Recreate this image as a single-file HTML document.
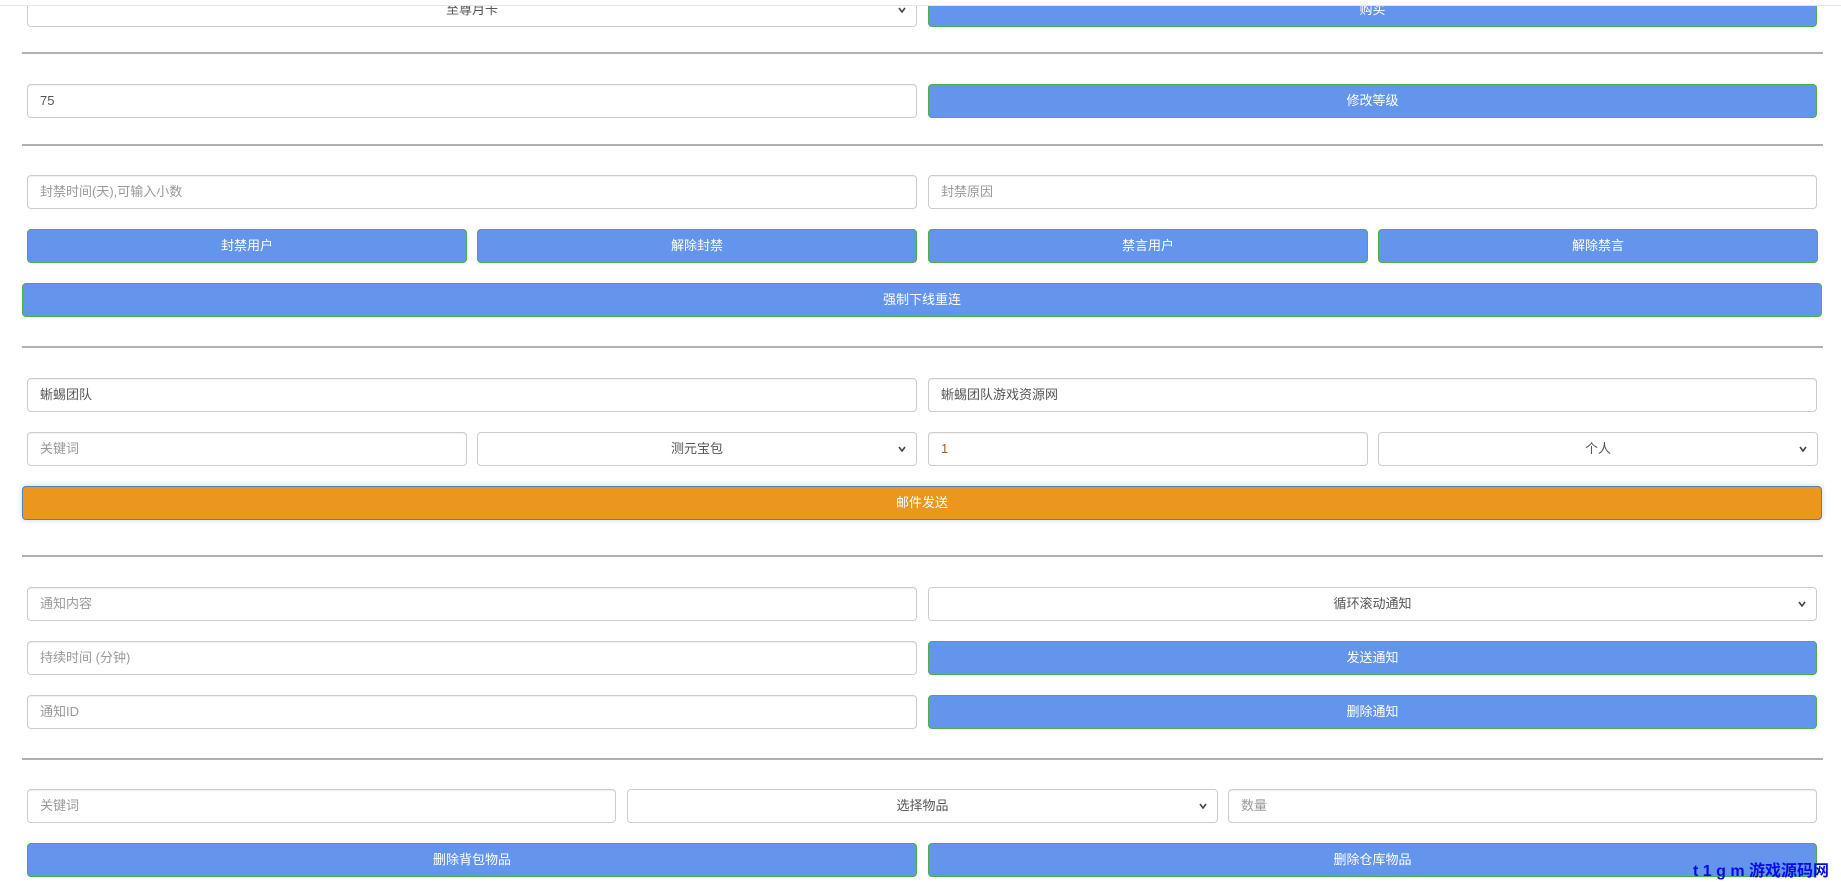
<!DOCTYPE html>
<html><head><meta charset="utf-8"><style>
*{box-sizing:border-box;margin:0;padding:0}
html,body{width:1841px;height:882px;overflow:hidden;background:#fff;font-family:"Liberation Sans","Noto Sans CJK SC",sans-serif;font-size:13px}
.a{position:absolute}
.in{position:absolute;height:34px;border:1px solid #ccc;border-radius:4px;background:#fff;color:#999;padding-left:12px;line-height:32px;box-shadow:inset 0 1px 1px rgba(0,0,0,.06)}
.v{color:#555}
.sel{position:absolute;height:34px;border:1px solid #ccc;border-radius:4px;background:#fff;color:#555;text-align:center;line-height:32px}
.sel svg{position:absolute;right:10px;top:13px}
.btn{position:absolute;height:34px;border:1px solid #4cae4c;border-radius:4px;background:#6495ed;color:#fff;text-align:center;line-height:32px}
.hr{position:absolute;left:22px;width:1801px;height:2px;background:#b0b0b0}
</style></head><body>
<div class="sel" style="left:27px;top:-7px;width:890px">至尊月卡<svg width="8" height="6"><path d="M1 1l3 4 3-4" stroke="#444" stroke-width="1.6" fill="none"/></svg></div>
<div class="btn" style="left:928px;top:-7px;width:889px">购买</div>
<div class="a" style="left:0;top:0;width:1841px;height:6px;background:#fff;border-bottom:1px solid #e6e6e6"></div>
<div class="hr" style="top:52px"></div>
<div class="in v" style="left:27px;top:84px;width:890px">75</div>
<div class="btn" style="left:928px;top:84px;width:889px">修改等级</div>
<div class="hr" style="top:144px"></div>
<div class="in" style="left:27px;top:175px;width:890px">封禁时间(天),可输入小数</div>
<div class="in" style="left:928px;top:175px;width:889px">封禁原因</div>
<div class="btn" style="left:27px;top:229px;width:440px">封禁用户</div>
<div class="btn" style="left:477px;top:229px;width:440px">解除封禁</div>
<div class="btn" style="left:928px;top:229px;width:440px">禁言用户</div>
<div class="btn" style="left:1378px;top:229px;width:440px">解除禁言</div>
<div class="btn" style="left:22px;top:283px;width:1800px">强制下线重连</div>
<div class="hr" style="top:346px"></div>
<div class="in v" style="left:27px;top:378px;width:890px">蜥蜴团队</div>
<div class="in v" style="left:928px;top:378px;width:889px">蜥蜴团队游戏资源网</div>
<div class="in" style="left:27px;top:432px;width:440px">关键词</div>
<div class="sel" style="left:477px;top:432px;width:440px">测元宝包<svg width="8" height="6"><path d="M1 1l3 4 3-4" stroke="#444" stroke-width="1.6" fill="none"/></svg></div>
<div class="in v" style="left:928px;top:432px;width:440px;color:#a0612a">1</div>
<div class="sel" style="left:1378px;top:432px;width:440px">个人<svg width="8" height="6"><path d="M1 1l3 4 3-4" stroke="#444" stroke-width="1.6" fill="none"/></svg></div>
<div class="btn" style="left:22px;top:486px;width:1800px;background:#ea961f;border-color:#5a7fb0;box-shadow:0 0 6px rgba(100,150,220,.4)">邮件发送</div>
<div class="hr" style="top:555px"></div>
<div class="in" style="left:27px;top:587px;width:890px">通知内容</div>
<div class="sel" style="left:928px;top:587px;width:889px">循环滚动通知<svg width="8" height="6"><path d="M1 1l3 4 3-4" stroke="#444" stroke-width="1.6" fill="none"/></svg></div>
<div class="in" style="left:27px;top:641px;width:890px">持续时间 (分钟)</div>
<div class="btn" style="left:928px;top:641px;width:889px">发送通知</div>
<div class="in" style="left:27px;top:695px;width:890px">通知ID</div>
<div class="btn" style="left:928px;top:695px;width:889px">删除通知</div>
<div class="hr" style="top:758px"></div>
<div class="in" style="left:27px;top:789px;width:589px">关键词</div>
<div class="sel" style="left:627px;top:789px;width:591px">选择物品<svg width="8" height="6"><path d="M1 1l3 4 3-4" stroke="#444" stroke-width="1.6" fill="none"/></svg></div>
<div class="in" style="left:1228px;top:789px;width:589px">数量</div>
<div class="btn" style="left:27px;top:843px;width:890px">删除背包物品</div>
<div class="btn" style="left:928px;top:843px;width:889px">删除仓库物品</div>
<div class="a" style="left:1693px;top:857px;color:#0a0ae6;font-weight:bold;font-size:16px;letter-spacing:0;white-space:nowrap">t 1 g m 游戏源码网</div>
</body></html>
